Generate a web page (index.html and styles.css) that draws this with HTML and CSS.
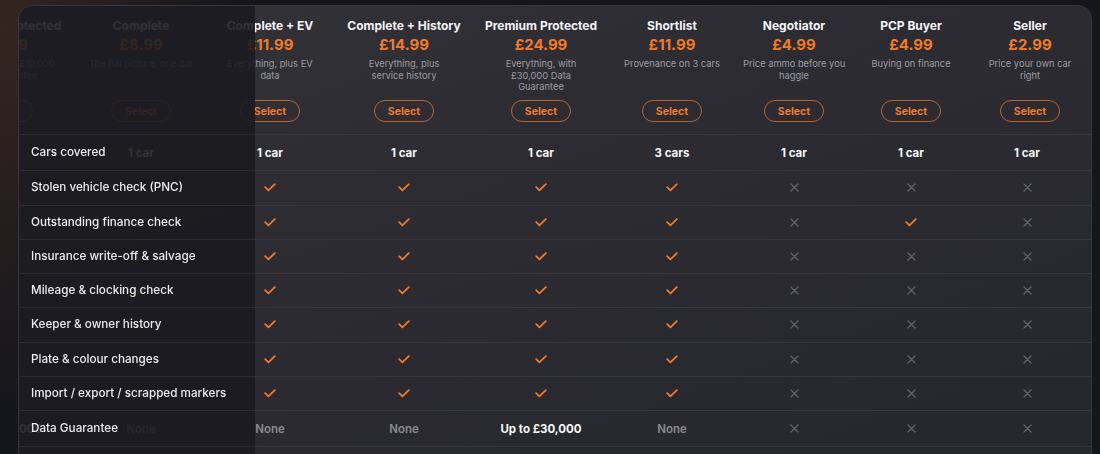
FILE: index.html
```html
<!DOCTYPE html>
<html>
    <head>
        <title>Compare plans</title>
        <link rel="stylesheet" href="styles.css">
    </head>
    <body>
        <div class="card">
            <div class="plans" id="plans">
                <table class="compare">
                    <colgroup>
                        <col class="col-label">
                        <col class="col-protected">
                        <col class="col-complete">
                        <col class="col-ev">
                        <col class="col-history">
                        <col class="col-premium">
                        <col class="col-shortlist">
                        <col class="col-negotiator">
                        <col class="col-pcp">
                        <col class="col-seller">
                    </colgroup>
                    <thead>
                        <tr>
                            <th class="label"></th>
                            <th class="plan">
                                <div class="plan-name">Complete Protected</div>
                                <div class="plan-price">£12.99</div>
                                <div class="plan-desc">Full check with £10,000<br>Data Guarantee</div>
                                <button class="select">Select</button>
                            </th>
                            <th class="plan">
                                <div class="plan-name">Complete</div>
                                <div class="plan-price">£8.99</div>
                                <div class="plan-desc">The full picture, one car</div>
                                <button class="select">Select</button>
                            </th>
                            <th class="plan">
                                <div class="plan-name">Complete + EV</div>
                                <div class="plan-price">£11.99</div>
                                <div class="plan-desc">Everything, plus EV<br>data</div>
                                <button class="select">Select</button>
                            </th>
                            <th class="plan">
                                <div class="plan-name">Complete + History</div>
                                <div class="plan-price">£14.99</div>
                                <div class="plan-desc">Everything, plus<br>service history</div>
                                <button class="select">Select</button>
                            </th>
                            <th class="plan">
                                <div class="plan-name">Premium Protected</div>
                                <div class="plan-price">£24.99</div>
                                <div class="plan-desc">Everything, with<br>£30,000 Data<br>Guarantee</div>
                                <button class="select">Select</button>
                            </th>
                            <th class="plan">
                                <div class="plan-name">Shortlist</div>
                                <div class="plan-price">£11.99</div>
                                <div class="plan-desc">Provenance on 3 cars</div>
                                <button class="select">Select</button>
                            </th>
                            <th class="plan">
                                <div class="plan-name">Negotiator</div>
                                <div class="plan-price">£4.99</div>
                                <div class="plan-desc">Price ammo before you<br>haggle</div>
                                <button class="select">Select</button>
                            </th>
                            <th class="plan">
                                <div class="plan-name">PCP Buyer</div>
                                <div class="plan-price">£4.99</div>
                                <div class="plan-desc">Buying on finance</div>
                                <button class="select">Select</button>
                            </th>
                            <th class="plan last">
                                <div class="plan-name">Seller</div>
                                <div class="plan-price">£2.99</div>
                                <div class="plan-desc">Price your own car<br>right</div>
                                <button class="select">Select</button>
                            </th>
                        </tr>
                    </thead>
                    <tbody id="rows">
                    </tbody>
                </table>
            </div>
        </div>
        <script>
            // y = included, n = not included, anything else is shown as text
            var features = [
                ["Cars covered", ["1 car", "1 car", "1 car", "1 car", "1 car", "3 cars", "1 car", "1 car", "1 car"]],
                ["Stolen vehicle check (PNC)", ["y", "y", "y", "y", "y", "y", "n", "n", "n"]],
                ["Outstanding finance check", ["y", "y", "y", "y", "y", "y", "n", "y", "n"]],
                ["Insurance write-off & salvage", ["y", "y", "y", "y", "y", "y", "n", "n", "n"]],
                ["Mileage & clocking check", ["y", "y", "y", "y", "y", "y", "n", "n", "n"]],
                ["Keeper & owner history", ["y", "y", "y", "y", "y", "y", "n", "n", "n"]],
                ["Plate & colour changes", ["y", "y", "y", "y", "y", "y", "n", "n", "n"]],
                ["Import / export / scrapped markers", ["y", "y", "y", "y", "y", "y", "n", "n", "n"]],
                ["Data Guarantee", ["Up to £10,000", "None", "None", "None", "Up to £30,000", "None", "n", "n", "n"]],
                ["Market valuation", ["y", "y", "y", "y", "y", "n", "y", "n", "y"]]
            ];

            var tick = '<svg class="tick" width="12" height="9" viewBox="0 0 12 9"><path d="M1.2 4.2L4.4 7.4L10.8 1.2"/></svg>';
            var cross = '<svg class="cross" width="9" height="9" viewBox="0 0 9 9"><path d="M1 1L8 8M8 1L1 8"/></svg>';

            var html = "";
            for (var i = 0; i < features.length; i++) {
                html += '<tr><th class="label">' + features[i][0] + '</th>';
                var values = features[i][1];
                for (var j = 0; j < values.length; j++) {
                    var cls = j == values.length - 1 ? ' class="last"' : '';
                    var v = values[j];
                    if (v == "y") {
                        html += '<td' + cls + '>' + tick + '</td>';
                    } else if (v == "n") {
                        html += '<td' + cls + '>' + cross + '</td>';
                    } else if (v == "None") {
                        html += '<td' + cls + '><span class="none">None</span></td>';
                    } else {
                        html += '<td' + cls + '><span class="value">' + v + '</span></td>';
                    }
                }
                html += '</tr>';
            }
            document.getElementById("rows").innerHTML = html;
            document.getElementById("plans").scrollLeft = 326;
        </script>
    </body>
</html>
```

FILE: styles.css
```css
* {
    box-sizing: border-box;
}
html, body {
    margin: 0;
    height: 100%;
    overflow: hidden;
}
body {
    background:
        radial-gradient(ellipse 240px 380px at 0px 30px, rgba(120, 68, 40, 0.32), rgba(120, 68, 40, 0) 100%),
        #15161c;
    font-family: Inter, "Noto Sans", sans-serif;
    color: #f1f1f4;
}
.card {
    margin: 5px 0 0 18px;
    width: 1074px;
    border: 1px solid #36373d;
    border-radius: 14px;
    overflow: hidden;
    background: linear-gradient(160deg, #343338 0%, #2c2c32 35%, #26272d 100%);
}
.plans {
    overflow-x: auto;
    scrollbar-width: none;
}
.plans::-webkit-scrollbar {
    display: none;
}
table.compare {
    table-layout: fixed;
    width: 1398px;
    border-collapse: separate;
    border-spacing: 0;
}
col.col-label { width: 236px; }
col.col-protected { width: 148px; }
col.col-complete { width: 128px; }
col.col-ev { width: 130px; }
col.col-history { width: 138px; }
col.col-premium { width: 136px; }
col.col-shortlist { width: 126px; }
col.col-negotiator { width: 118px; }
col.col-pcp { width: 116px; }
col.col-seller { width: 122px; }

th, td {
    padding: 8px 8px;
    border-bottom: 1px solid #37383e;
    text-align: center;
    vertical-align: middle;
    line-height: 17.25px;
}
th.last, td.last {
    padding-right: 14px;
}
th.label {
    position: sticky;
    left: 0;
    z-index: 2;
    background: rgba(26, 26, 32, 0.89);
    border-bottom-color: #2b2b31;
    text-align: left;
    padding-left: 12px;
    font-size: 11.7px;
    font-weight: 500;
    color: #ececf0;
    white-space: nowrap;
}
th.plan {
    padding: 12px 8px 12px;
    vertical-align: top;
}
.plan-name {
    font-size: 12px;
    font-weight: 700;
    line-height: 16px;
    color: #f4f4f6;
    white-space: nowrap;
}
.plan-price {
    margin-top: 1px;
    font-size: 15px;
    font-weight: 700;
    line-height: 20px;
    color: #f07a2c;
}
.plan-desc {
    margin-top: 3px;
    min-height: 34.5px;
    font-size: 9.3px;
    font-weight: 400;
    line-height: 11.5px;
    color: #9c9ca3;
    white-space: nowrap;
}
button.select {
    display: block;
    margin: 7.5px auto 0;
    width: 60px;
    height: 22px;
    padding: 0;
    border: 1px solid rgba(240, 122, 44, 0.72);
    border-radius: 11px;
    background: transparent;
    font-family: Inter, "Noto Sans", sans-serif;
    font-size: 10.5px;
    font-weight: 700;
    color: #f07a2c;
}
.value {
    font-size: 11.5px;
    font-weight: 700;
    color: #f6f6f8;
}
.none {
    font-size: 11.5px;
    font-weight: 600;
    color: #8b8b92;
}
svg.tick, svg.cross {
    display: block;
    margin: 0 auto;
    fill: none;
}
svg.tick path {
    stroke: #f07a2c;
    stroke-width: 1.8;
    stroke-linecap: round;
    stroke-linejoin: round;
}
svg.cross path {
    stroke: #62636a;
    stroke-width: 1.3;
    stroke-linecap: round;
}
```
